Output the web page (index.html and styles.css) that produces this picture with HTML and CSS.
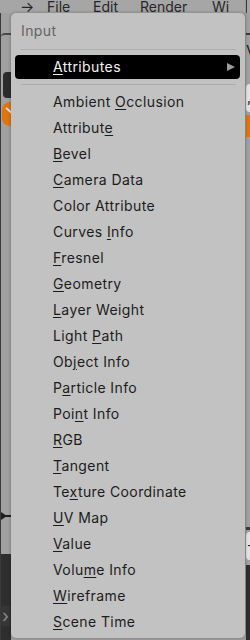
FILE: index.html
```html
<!DOCTYPE html>
<html lang="en">
<head>
  <meta charset="utf-8">
  <title>Input menu</title>
  <link rel="stylesheet" href="styles.css">
</head>
<body>
  <div class="editor">
    <div class="main">
      <div class="topbar">
        <span class="arrow">&#8594;</span>
        <span class="tb-item tb-file">File</span>
        <span class="tb-item tb-edit">Edit</span>
        <span class="tb-item tb-render">Render</span>
        <span class="tb-item tb-window">Wi</span>
      </div>
      <div class="area">
        <div class="side side-left">
          <div class="blk" style="height: 20px"></div>
          <div class="blk panel-top" style="height: 39px"></div>
          <div class="knob"></div>
          <div class="blk" style="height: 4px"></div>
          <div class="slider"><span class="slash"></span></div>
          <div class="blk" style="height: 385px"></div>
          <div class="socket"></div>
          <div class="blk" style="height: 33px"></div>
          <div class="dark"><span class="chev">&#8250;</span></div>
        </div>
        <div class="canvas"></div>
      </div>
    </div>
    <div class="side side-right">
      <div class="top-cap"></div>
      <div class="blk" style="height: 20px"></div>
      <div class="rule"></div>
      <div class="letter">V</div>
      <div class="blk" style="height: 12px"></div>
      <div class="field"><span class="comma">,</span></div>
      <div class="blk" style="height: 3px"></div>
      <div class="orange"></div>
      <div class="blk" style="height: 390px"></div>
      <div class="rule" style="height: 3px"></div>
      <div class="blk" style="height: 2px"></div>
      <div class="field"><span class="dash">-</span></div>
      <div class="blk" style="height: 5px"></div>
      <div class="dark"></div>
    </div>
  </div>

  <div class="menu">
    <div class="menu-title">Input</div>
    <div class="sep"></div>
    <div class="item active"><span><u>A</u>ttributes</span><span class="sub-arrow"></span></div>
    <div class="sep last"></div>
    <div class="list">
      <div class="item">Ambient <u>O</u>cclusion</div>
      <div class="item">Attribut<u>e</u></div>
      <div class="item"><u>B</u>evel</div>
      <div class="item"><u>C</u>amera Data</div>
      <div class="item">Color Attribute</div>
      <div class="item">Curves <u>I</u>nfo</div>
      <div class="item"><u>F</u>resnel</div>
      <div class="item"><u>G</u>eometry</div>
      <div class="item"><u>L</u>ayer Weight</div>
      <div class="item">Light <u>P</u>ath</div>
      <div class="item">Ob<u>j</u>ect Info</div>
      <div class="item">P<u>a</u>rticle Info</div>
      <div class="item">Poi<u>n</u>t Info</div>
      <div class="item"><u>R</u>GB</div>
      <div class="item"><u>T</u>angent</div>
      <div class="item">Te<u>x</u>ture Coordinate</div>
      <div class="item"><u>U</u>V Map</div>
      <div class="item"><u>V</u>alue</div>
      <div class="item">Volu<u>m</u>e Info</div>
      <div class="item"><u>W</u>ireframe</div>
      <div class="item"><u>S</u>cene Time</div>
    </div>
  </div>
</body>
</html>
```

FILE: styles.css
```css
* {
  box-sizing: border-box;
}

body {
  margin: 0;
  width: 250px;
  height: 640px;
  overflow: hidden;
  background: #a2a2a2;
  font-family: Inter, "Noto Sans", sans-serif;
  font-size: 14px;
}

.editor {
  display: flex;
  height: 640px;
}

.main {
  flex: 1;
  min-width: 0;
  display: flex;
  flex-direction: column;
}

.topbar {
  height: 13px;
  background: #a6a6a6;
  display: flex;
  align-items: flex-start;
  color: #262626;
  line-height: 14px;
  white-space: nowrap;
}

.topbar span {
  flex-shrink: 0;
}

.arrow {
  margin-left: 20px;
  width: 27px;
  font-size: 15px;
}

.tb-file { width: 46px; }
.tb-edit { width: 47px; }
.tb-render { width: 72px; }

.area {
  flex: 1;
  display: flex;
}

.side {
  display: flex;
  flex-direction: column;
}

.side-left {
  width: 11px;
  border-left: 1px solid #3a3a3a;
}

.side-right {
  width: 5px;
  border-left: 1px solid #989898;
}

.top-cap {
  height: 13px;
  background: #a6a6a6;
  border-left: 1px solid #3a3a3a;
  flex-shrink: 0;
}

.canvas {
  flex: 1;
}

.blk {
  background: #a0a0a0;
  flex-shrink: 0;
}

.panel-top {
  border-top: 2px solid #4a4a4a;
  border-top-left-radius: 4px;
}

.knob {
  height: 26px;
  margin-left: 2px;
  background: #2c2c2c;
  border-radius: 4px 0 0 4px;
  flex-shrink: 0;
}

.slider {
  height: 24px;
  margin-left: 1px;
  background: #e07410;
  border-radius: 8px 0 0 8px;
  flex-shrink: 0;
  position: relative;
  overflow: hidden;
}

.slash {
  position: absolute;
  left: 3px;
  top: 8px;
  width: 9px;
  height: 2px;
  background: #f4e6d8;
  transform: rotate(40deg);
}

.socket {
  height: 10px;
  flex-shrink: 0;
  background: #a0a0a0;
  position: relative;
}

.socket::before {
  content: "";
  position: absolute;
  left: 0;
  top: 1px;
  border-left: 6px solid #1e1e1e;
  border-top: 4px solid transparent;
  border-bottom: 4px solid transparent;
}

.socket::after {
  content: "";
  position: absolute;
  left: 4px;
  top: 4px;
  width: 6px;
  height: 2px;
  background: #1e1e1e;
}

.dark {
  flex: 1;
  background: #2e2e2e;
  display: flex;
  align-items: flex-end;
  padding-bottom: 14px;
}

.chev {
  color: #8a8a8a;
  font-size: 18px;
  line-height: 20px;
  width: 9px;
  padding-left: 1px;
  background: #363636;
}

.rule {
  height: 2px;
  background: #3a3a3a;
  flex-shrink: 0;
}

.letter {
  height: 37px;
  background: #a0a0a0;
  color: #1e1e1e;
  font-size: 15px;
  line-height: 22px;
  padding-top: 5px;
  flex-shrink: 0;
}

.field {
  height: 28px;
  background: #e2e2e2;
  border-radius: 4px 0 0 4px;
  color: #222;
  line-height: 26px;
  flex-shrink: 0;
  padding-left: 1px;
}

.orange {
  height: 22px;
  background: #e07410;
  flex-shrink: 0;
}

/* popup menu */

.menu {
  position: absolute;
  left: 11px;
  top: 13px;
  width: 234px;
  height: 625px;
  background: #c2c2c2;
  border-radius: 5px;
  box-shadow: 0 0 3px 1px rgba(0, 0, 0, 0.18);
  padding-top: 5px;
  color: #1c1c1c;
  letter-spacing: 0.4px;
}

.menu-title {
  height: 26px;
  line-height: 26px;
  padding-left: 10px;
  color: #646464;
}

.sep {
  height: 1px;
  background: #acacac;
  margin: 5px 9px 5px 10px;
}

.sep.last {
  margin-bottom: 0;
}

.item {
  height: 26px;
  line-height: 26px;
  padding-left: 42px;
  white-space: nowrap;
}

.item u {
  text-decoration-thickness: 1px;
  text-underline-offset: 2px;
}

.item.active {
  height: 24px;
  line-height: 24px;
  margin: 0 5px 0 4px;
  padding-left: 38px;
  background: #000;
  color: #f2f2f2;
  border-radius: 4px;
  display: flex;
  align-items: center;
  justify-content: space-between;
  padding-right: 5px;
}

.sub-arrow {
  width: 0;
  height: 0;
  border-left: 8px solid #9a9a9a;
  border-top: 4.5px solid transparent;
  border-bottom: 4.5px solid transparent;
}

.list {
  padding-top: 4px;
}
```
